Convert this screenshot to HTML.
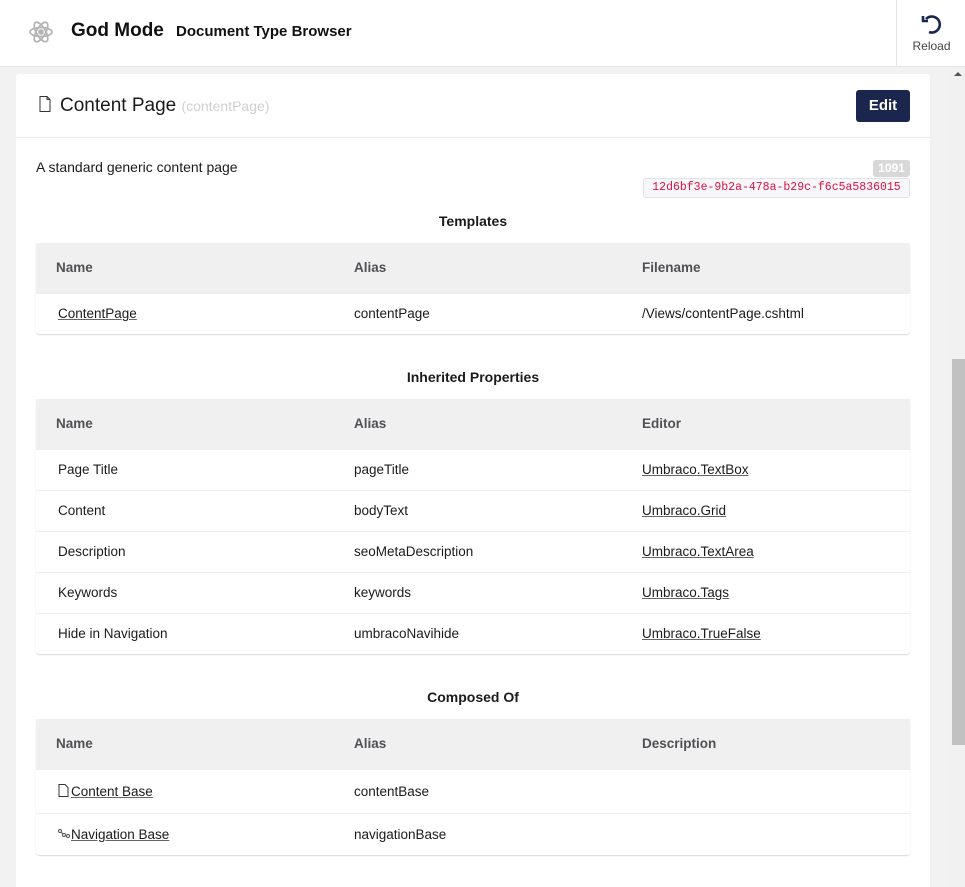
<!DOCTYPE html>
<html><head><style>
*{box-sizing:border-box;margin:0;padding:0}
html,body{width:965px;height:887px;overflow:hidden}
body{background:#f3f2f3;font-family:"Liberation Sans",sans-serif;color:#1b1b1b;position:relative}
.hdr{position:absolute;left:0;top:0;width:965px;height:67px;background:#fff;border-bottom:1px solid #e4e4e4}
.hdr .t1{position:absolute;left:71px;top:20px;font-size:19px;font-weight:bold;color:#111}
.hdr .t2{position:absolute;left:176px;top:23px;font-size:15px;font-weight:bold;color:#111}
.reload{position:absolute;left:896px;top:0;width:69px;height:66px;border-left:1px solid #e4e4e4;text-align:center}
.reload span{position:absolute;top:39px;left:0;width:69px;font-size:12px;color:#444}
.card{position:absolute;left:16px;top:74px;width:914px;height:830px;background:#fff;border-radius:3px}
.ch{height:64px;border-bottom:1px solid #e9e9eb;position:relative}
.ch .title{position:absolute;left:44px;top:21px;font-size:19px;color:#1b1b1b}
.ch .title small{font-size:14px;color:#d0d0d0}
.edit{position:absolute;left:840px;top:16px;width:54px;height:32px;background:#1b264f;color:#fff;border-radius:3px;font-size:15px;font-weight:bold;text-align:center;line-height:32px}
.desc{position:absolute;left:20px;top:85px;font-size:14px}
.badge{position:absolute;left:857px;top:86px;width:37px;height:17px;background:#d8d8d8;color:#fff;font-size:12px;font-weight:bold;text-align:center;line-height:17px;border-radius:3px}
.guid{position:absolute;left:627px;top:104px;width:267px;height:20px;border:1px solid #e1e1e8;background:#f7f7f9;border-radius:3px;color:#d14;font-family:"Liberation Mono",monospace;font-size:11.5px;text-align:center;line-height:18px}
.sec{position:absolute;left:20px;width:874px}
.sec h3{text-align:center;font-size:14px;font-weight:bold;height:30px;color:#1b1b1b}
table{width:874px;border-collapse:collapse;font-size:13.5px;box-shadow:0 1px 1px rgba(0,0,0,.15);border-radius:3px}
th{background:#f0f0f0;height:50px;text-align:left;font-weight:bold;color:#515054;padding-left:20px}
th+th{padding-left:22px}
td{height:41px;padding-left:22px;border-top:1px solid #eee;color:#1b1b1b}
a{color:#1b1b1b;text-decoration:underline;text-decoration-color:#666}
.c1{width:296px}.c2{width:288px}
.sb{position:absolute;left:950px;top:67px;width:15px;height:820px;background:#f1f1f1}
.thumb{position:absolute;left:952px;top:359px;width:13px;height:386px;background:#c1c1c1}
</style></head><body>
<div class="hdr">
<svg style="position:absolute;left:28px;top:18px" width="26" height="28" viewBox="0 0 26 28" fill="none" stroke="#b5b5b5" stroke-width="1.8"><ellipse cx="13" cy="14" rx="11" ry="4.5"/><ellipse cx="13" cy="14" rx="11" ry="4.5" transform="rotate(60 13 14)"/><ellipse cx="13" cy="14" rx="11" ry="4.5" transform="rotate(-60 13 14)"/><circle cx="13" cy="14" r="2" fill="#b5b5b5"/></svg>
<div class="t1">God Mode</div><div class="t2">Document Type Browser</div>
<div class="reload"><svg style="position:absolute;left:23px;top:12px" width="24" height="24" viewBox="0 0 24 24" fill="none" stroke="#1b264f" stroke-width="2.6"><path d="M6 7A8 8 0 1 1 9 20"/><path d="M3 4v5h5" stroke-linejoin="miter"/></svg><span>Reload</span></div>
</div>
<div class="sb"></div><div class="thumb"></div>
<div style="position:absolute;top:72px;width:0;height:0;border-left:4px solid transparent;border-right:4px solid transparent;border-bottom:4px solid #555;left:954px"></div>
<div class="card">
<div class="ch">
<svg style="position:absolute;left:23px;top:22px" width="12" height="16" viewBox="0 0 12 16" fill="none" stroke="#333" stroke-width="1"><path d="M1 .5h7l3 3v12H1z"/><path d="M8 .5v3h3"/></svg>
<div class="title">Content Page <small>(contentPage)</small></div>
<div class="edit">Edit</div></div>
<div class="desc">A standard generic content page</div>
<div class="badge">1091</div>
<div class="guid">12d6bf3e-9b2a-478a-b29c-f6c5a5836015</div>
<div class="sec" style="top:139px"><h3>Templates</h3>
<table><tr><th class="c1">Name</th><th class="c2">Alias</th><th>Filename</th></tr>
<tr><td><a>ContentPage</a></td><td>contentPage</td><td>/Views/contentPage.cshtml</td></tr></table></div>
<div class="sec" style="top:295px"><h3>Inherited Properties</h3>
<table><tr><th class="c1">Name</th><th class="c2">Alias</th><th>Editor</th></tr>
<tr><td>Page Title</td><td>pageTitle</td><td><a>Umbraco.TextBox</a></td></tr>
<tr><td>Content</td><td>bodyText</td><td><a>Umbraco.Grid</a></td></tr>
<tr><td>Description</td><td>seoMetaDescription</td><td><a>Umbraco.TextArea</a></td></tr>
<tr><td>Keywords</td><td>keywords</td><td><a>Umbraco.Tags</a></td></tr>
<tr><td>Hide in Navigation</td><td>umbracoNavihide</td><td><a>Umbraco.TrueFalse</a></td></tr></table></div>
<div class="sec" style="top:615px"><h3>Composed Of</h3>
<table><tr><th class="c1">Name</th><th class="c2">Alias</th><th>Description</th></tr>
<tr><td style="height:44px"><svg width="11" height="13" viewBox="0 0 11 13" fill="none" stroke="#333" stroke-width="1" style="vertical-align:-1px;margin-right:2px"><path d="M1 .5h6l3 3v9H1z"/></svg><a>Content Base</a></td><td>contentBase</td><td></td></tr>
<tr><td style="height:42px"><svg width="12" height="10" viewBox="0 0 12 10" fill="none" stroke="#555" stroke-width="1" style="margin-right:1px"><circle cx="2" cy="2" r="1.5"/><circle cx="6" cy="6" r="1.5"/><circle cx="10" cy="7" r="1.5"/><path d="M3 3l2 2M7.5 6.5h1"/></svg><a>Navigation Base</a></td><td>navigationBase</td><td></td></tr></table></div>
</div>
</body></html>
